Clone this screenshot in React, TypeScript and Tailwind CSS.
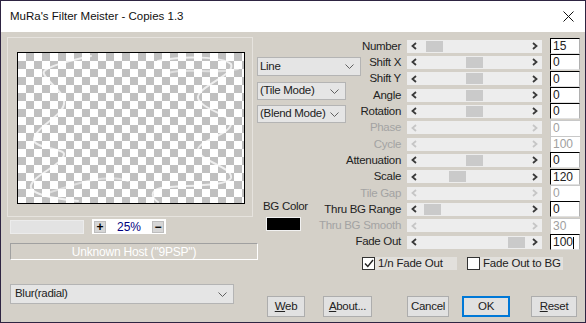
import React from 'react';

type Param = {
    label: string;
    value: string;
    thumb?: number;
    disabled?: boolean;
    caret?: boolean;
};

const params: Param[] = [
    { label: 'Number', value: '15', thumb: 19 },
    { label: 'Shift X', value: '0', thumb: 59 },
    { label: 'Shift Y', value: '0', thumb: 59 },
    { label: 'Angle', value: '0', thumb: 59 },
    { label: 'Rotation', value: '0', thumb: 59 },
    { label: 'Phase', value: '0', disabled: true },
    { label: 'Cycle', value: '100', disabled: true },
    { label: 'Attenuation', value: '0', thumb: 59 },
    { label: 'Scale', value: '120', thumb: 42 },
    { label: 'Tile Gap', value: '0', disabled: true },
    { label: 'Thru BG Range', value: '0', thumb: 17 },
    { label: 'Thru BG Smooth', value: '30', disabled: true },
    { label: 'Fade Out', value: '100', thumb: 101, caret: true },
];

function ChevronDown() {
    return (
        <svg width="9" height="5" viewBox="0 0 9 5">
            <path d="M0.5 0.5 L4.5 4.5 L8.5 0.5" fill="none" stroke="#606060" strokeWidth="1" />
        </svg>
    );
}

function Arrow({ dir, disabled }: { dir: 'left' | 'right'; disabled?: boolean }) {
    const d = dir === 'left' ? 'M5 1 L1.5 4 L5 7' : 'M1 1 L4.5 4 L1 7';
    return (
        <svg width="6" height="8" viewBox="0 0 6 8">
            <path d={d} fill="none" stroke={disabled ? '#c6c6c6' : '#3a3a3a'} strokeWidth="1.8" />
        </svg>
    );
}

function Dropdown({ label, className }: { label: string; className: string }) {
    return (
        <div className={`flex items-center justify-between whitespace-nowrap bg-[#e5e5e5] border border-[#b4b4b4] pl-[2px] pr-[6px] text-[11.5px] tracking-[-0.3px] text-[#222] ${className}`}>
            <span>{label}</span>
            <ChevronDown />
        </div>
    );
}

function Button({ children, className, primary }: { children: React.ReactNode; className: string; primary?: boolean }) {
    return (
        <div
            className={`h-[21px] flex items-center justify-center whitespace-nowrap bg-[#e1e1e1] text-[11.5px] tracking-[-0.3px] text-[#222] ${
                primary ? 'border-2 border-[#0078d7]' : 'border border-[#adadad]'
            } ${className}`}
        >
            {children}
        </div>
    );
}

function ParamRow({ p }: { p: Param }) {
    return (
        <div className="flex items-center h-[16.33px]">
            <div className={`w-[83px] text-right whitespace-nowrap text-[11.5px] tracking-[-0.3px] ${p.disabled ? 'text-[#a3a3a3]' : 'text-[#222]'}`}>
                {p.label}
            </div>
            <div className="ml-[6px] relative w-[135px] h-[13px] bg-[#ededed] flex items-center justify-between px-[4px]">
                <Arrow dir="left" disabled={p.disabled} />
                {!p.disabled && p.thumb !== undefined && (
                    <div className="absolute top-[1px] w-[17px] h-[11px] bg-[#cacaca]" style={{ left: p.thumb }} />
                )}
                <Arrow dir="right" disabled={p.disabled} />
            </div>
            <div
                className={`ml-[8px] w-[30px] h-[16px] bg-white pl-[2px] leading-[15px] text-[12px] border-l border-t ${
                    p.disabled
                        ? 'border-[#c8c8c8] text-[#a0a0a0]'
                        : 'border-l-black border-t-black border-r border-b border-r-[#b0b0b0] border-b-[#e0e0e0] text-[#222]'
                }`}
            >
                {p.value}
                {p.caret && <span className="inline-block w-[1px] h-[12px] bg-black align-middle" />}
            </div>
        </div>
    );
}

function Checkbox({ label, checked, className }: { label: string; checked?: boolean; className: string }) {
    return (
        <div className={`flex items-center h-[13px] bg-[#e2e0dc] whitespace-nowrap ${className}`}>
            <div className="w-[13px] h-[13px] shrink-0 bg-white border border-[#333] flex items-center justify-center">
                {checked && (
                    <svg width="10" height="9" viewBox="0 0 10 9">
                        <path d="M1 4.5 L3.8 7.5 L9 1" fill="none" stroke="#222" strokeWidth="1.4" />
                    </svg>
                )}
            </div>
            <span className="ml-[3px] text-[11.5px] tracking-[-0.2px] text-[#222]">{label}</span>
        </div>
    );
}

function Preview() {
    return (
        <div className="relative w-[228px] h-[152px] border border-black bg-[conic-gradient(#c0c0c0_25%,#ffffff_0_50%,#c0c0c0_0_75%,#ffffff_0)] bg-[length:16px_16px]">
            <svg className="absolute inset-0" width="226" height="150" viewBox="0 0 226 150">
                <g fill="none" stroke="#ffffff" strokeOpacity="0.75" strokeWidth="2" strokeLinecap="round">
                    <path d="M73 3 C50 8 22 15 26 21 C30 30 48 40 46 51 C44 64 14 76 16 88 C18 95 46 96 46 101 C46 112 10 124 13 135 C16 142 40 146 60 148" />
                    <path d="M140 8 C165 2 205 4 213 11 C218 22 178 34 180 45 C182 56 214 62 213 71 C212 82 178 88 180 98 C182 108 215 114 213 125 C210 134 160 132 143 135 C130 138 135 146 140 149" />
                    <path d="M150 20 C170 14 195 22 220 16" strokeOpacity="0.5" />
                    <path d="M30 140 C60 130 90 120 110 128" strokeOpacity="0.5" />
                </g>
            </svg>
        </div>
    );
}

export default function App() {
    return (
        <div className="w-[586px] h-[323px] border border-[#2e2442] bg-[#d4d0c8] flex flex-col overflow-hidden font-['Liberation_Sans',Arial,sans-serif]">
            {/* Title bar */}
            <div className="h-[31px] shrink-0 bg-white flex items-center justify-between pl-[9px] pr-[11px]">
                <span className="text-[11.5px] text-[#111]">MuRa's Filter Meister - Copies 1.3</span>
                <svg width="11" height="11" viewBox="0 0 11 11">
                    <path d="M0.5 0.5 L10.5 10.5 M10.5 0.5 L0.5 10.5" stroke="#111" strokeWidth="1" />
                </svg>
            </div>

            {/* Body */}
            <div className="flex-1 flex flex-col">
                <div className="flex pl-[6px] h-[239px]">
                    {/* Preview column */}
                    <div className="w-[250px] shrink-0 flex flex-col">
                        <div className="mt-[5px] w-[246px] h-[180px] border border-[#e6e3de] pl-[9px] pt-[14px]">
                            <Preview />
                        </div>
                        <div className="mt-[2px] ml-[3px] flex items-center">
                            <div className="w-[74px] h-[14px] bg-[#e3e3e3] border border-[#ececec]" />
                            <div className="ml-[8px] w-[74px] h-[15px] bg-white flex items-center justify-between px-[2px]">
                                <div className="w-[12px] h-[12px] bg-[#d6d6d6] border border-[#bdbdbd] flex items-center justify-center text-[12px] font-bold leading-none text-black">
                                    +
                                </div>
                                <span className="text-[12px] text-[#000080]">25%</span>
                                <div className="w-[12px] h-[12px] bg-[#d6d6d6] border border-[#bdbdbd] flex items-center justify-center text-[12px] font-bold leading-none text-black">
                                    −
                                </div>
                            </div>
                        </div>
                        <div className="mt-[9px] ml-[3px] w-[248px] h-[17px] border border-t-[#a0a0a0] border-l-[#a0a0a0] border-r-white border-b-white flex items-center justify-center text-[12px] tracking-[-0.2px] text-white">
                            Unknown Host ("9PSP")
                        </div>
                    </div>

                    {/* Mode column */}
                    <div className="w-[61px] shrink-0 flex flex-col relative z-10">
                        <Dropdown label="Line" className="mt-[25px] w-[104px] h-[19px]" />
                        <Dropdown label="(Tile Mode)" className="mt-[6px] w-[89px] h-[18px]" />
                        <Dropdown label="(Blend Mode)" className="mt-[5px] w-[89px] h-[18px]" />
                        <div className="mt-[77px] ml-[6px] h-[13px] leading-[13px] text-[11.5px] tracking-[-0.3px] text-[#222] whitespace-nowrap">BG Color</div>
                        <div className="mt-[4px] ml-[9px] w-[35px] h-[14px] bg-black border border-[#f2f2f2]" />
                    </div>

                    {/* Parameters column */}
                    <div className="flex flex-col pt-[6px]">
                        {params.map((p) => (
                            <ParamRow key={p.label} p={p} />
                        ))}
                        <div className="mt-[7px] ml-[44px] flex">
                            <Checkbox label="1/n Fade Out" checked className="w-[95px]" />
                            <Checkbox label="Fade Out to BG" className="ml-[10px] w-[96px]" />
                        </div>
                    </div>
                </div>

                {/* Bottom row */}
                <div className="mt-[13px] pl-[9px] flex items-start">
                    <Dropdown label="Blur(radial)" className="w-[224px] h-[20px] pl-[4px] pr-[6px]" />
                    <div className="mt-[12px] ml-[33px] flex">
                        <Button className="w-[38px]"><span><u>W</u>eb</span></Button>
                        <Button className="ml-[18px] w-[49px]"><span><u>A</u>bout...</span></Button>
                        <Button className="ml-[35px] w-[42px]">Cancel</Button>
                        <Button primary className="ml-[13px] w-[48px]">OK</Button>
                        <Button className="ml-[21px] w-[46px]"><span><u>R</u>eset</span></Button>
                    </div>
                </div>
            </div>
        </div>
    );
}
